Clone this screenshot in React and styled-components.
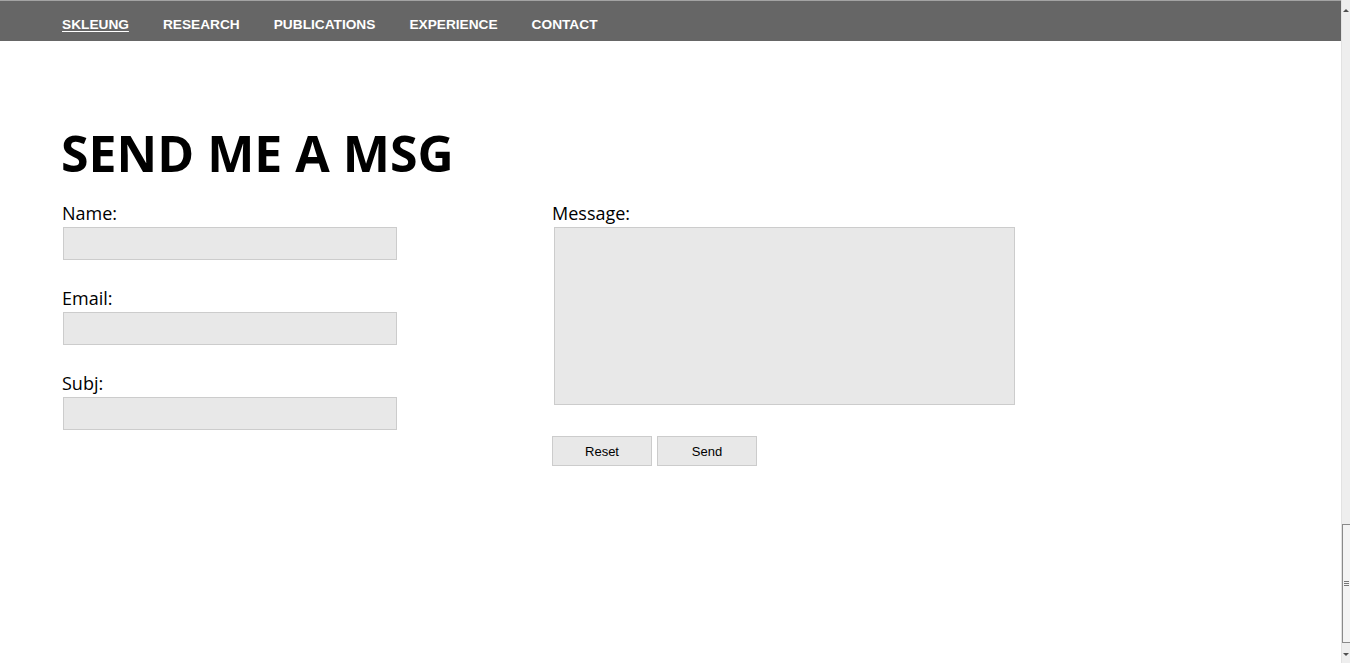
import React from "react";
import styled, { createGlobalStyle } from "styled-components";

const Global = createGlobalStyle`
  html, body { margin: 0; padding: 0; background: #fff; overflow: hidden; }
  * { box-sizing: border-box; }
`;

const Shell = styled.div`
  display: flex;
  width: 1350px;
  height: 663px;
`;

const Page = styled.div`
  flex: 1;
  display: flex;
  flex-direction: column;
  font-family: "Open Sans", sans-serif;
  color: #000;
`;

const NavBar = styled.nav`
  height: 41px;
  background: #666666;
  border-top: 1px solid #a3a3a3;
  display: flex;
  align-items: center;
  padding-left: 62px;
  gap: 34px;
`;

const NavLink = styled.a`
  font-family: "Liberation Sans", Arial, sans-serif;
  font-weight: bold;
  font-size: 13.7px;
  color: #fff;
  text-transform: uppercase;
  text-decoration: ${(p) => (p.$active ? "underline" : "none")};
  text-underline-offset: 2px;
  margin-top: 6px;
`;

const Content = styled.main`
  padding: 74px 0 0 62px;
`;

const Title = styled.h1`
  font-family: "Open Sans", sans-serif;
  font-weight: 700;
  font-size: 50px;
  line-height: 76px;
  margin: 0 0 0 -1px;
`;

const Columns = styled.div`
  display: grid;
  grid-template-columns: 490px 470px;
  margin-top: 10px;
`;

const Column = styled.div`
  display: flex;
  flex-direction: column;
`;

const Field = styled.div`
  display: flex;
  flex-direction: column;
  margin-bottom: 26px;
`;

const Label = styled.label`
  font-size: 18px;
  line-height: 24px;
  margin-bottom: 2px;
`;

const Input = styled.input`
  width: 334px;
  height: 33px;
  margin-left: 1px;
  background: #e8e8e8;
  border: 1px solid #cccccc;
  outline: none;
`;

const TextArea = styled.textarea`
  width: 461px;
  height: 178px;
  margin-left: 2px;
  background: #e8e8e8;
  border: 1px solid #cccccc;
  resize: none;
  outline: none;
`;

const Buttons = styled.div`
  display: flex;
  gap: 5px;
  margin-top: 31px;
`;

const Button = styled.button`
  width: 100px;
  height: 30px;
  background: #e8e8e8;
  border: 1px solid #cccccc;
  font-family: "Liberation Sans", Arial, sans-serif;
  font-size: 13px;
  color: #000;
  padding: 0;
  padding-top: 1px;
`;

const Scrollbar = styled.div`
  width: 9px;
  background: #eeeeee;
  border-left: 1px solid #e2e2e2;
  display: flex;
  flex-direction: column;
  align-items: center;
`;

const Arrow = styled.div`
  width: 0;
  height: 0;
  border-left: 3px solid transparent;
  border-right: 3px solid transparent;
  ${(p) =>
    p.$up
      ? "border-bottom: 3px solid #505050; margin-top: 9px;"
      : "border-top: 3px solid #505050; margin-top: 10px; margin-bottom: 7px;"}
`;

const Track = styled.div`
  flex: 1;
`;

const Thumb = styled.div`
  width: 8px;
  height: 119px;
  background: #f4f4f4;
  border: 1px solid #8a8a8a;
  border-right: none;
  display: flex;
  flex-direction: column;
  justify-content: center;
  align-items: center;
  gap: 1px;
`;

const Grip = styled.div`
  width: 5px;
  height: 1px;
  background: #777;
`;

export default function App() {
  return (
    <>
      <Global />
      <Shell>
        <Page>
          <NavBar>
            <NavLink $active>Skleung</NavLink>
            <NavLink>Research</NavLink>
            <NavLink>Publications</NavLink>
            <NavLink>Experience</NavLink>
            <NavLink>Contact</NavLink>
          </NavBar>
          <Content>
            <Title>SEND ME A MSG</Title>
            <Columns>
              <Column>
                <Field>
                  <Label>Name:</Label>
                  <Input type="text" />
                </Field>
                <Field>
                  <Label>Email:</Label>
                  <Input type="text" />
                </Field>
                <Field>
                  <Label>Subj:</Label>
                  <Input type="text" />
                </Field>
              </Column>
              <Column>
                <Label>Message:</Label>
                <TextArea />
                <Buttons>
                  <Button>Reset</Button>
                  <Button>Send</Button>
                </Buttons>
              </Column>
            </Columns>
          </Content>
        </Page>
        <Scrollbar>
          <Arrow $up />
          <Track />
          <Thumb>
            <Grip />
            <Grip />
            <Grip />
          </Thumb>
          <Arrow />
        </Scrollbar>
      </Shell>
    </>
  );
}
